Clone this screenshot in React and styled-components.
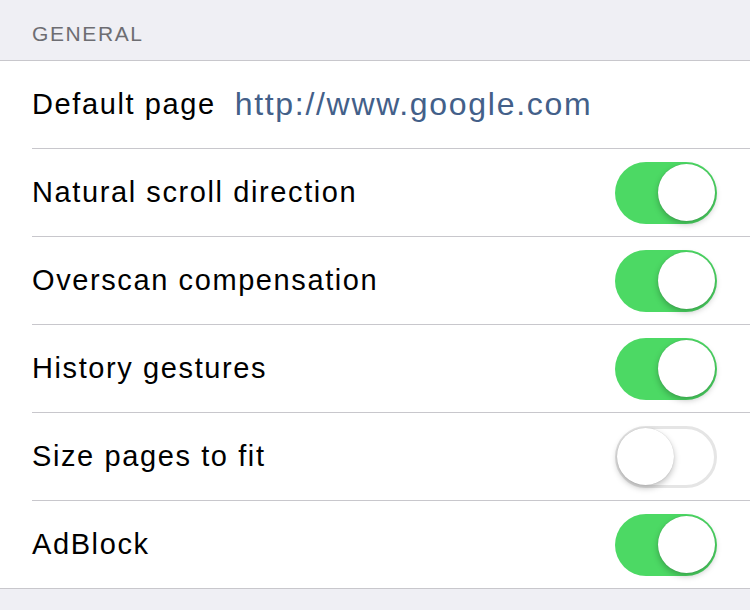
import React, { useState } from 'react';
import styled, { createGlobalStyle } from 'styled-components';

const GlobalStyle = createGlobalStyle`
    html, body {
        margin: 0;
        padding: 0;
        background: #efeff4;
        font-family: "Liberation Sans", Arial, sans-serif;
    }
`;

const Page = styled.div`
    width: 750px;
    height: 610px;
    background: #efeff4;
    overflow: hidden;
`;

const SectionHeader = styled.div`
    height: 60px;
    box-sizing: border-box;
    padding: 22px 32px 0;
    font-size: 21px;
    color: #6d6d72;
    letter-spacing: 1.6px;
`;

const Group = styled.div`
    background: #fff;
    border-top: 1px solid #c8c7cc;
    border-bottom: 1px solid #c8c7cc;
`;

const Row = styled.div`
    height: 87px;
    margin-left: 32px;
    padding-right: 33px;
    display: flex;
    align-items: center;
    border-top: ${(p) => (p.first ? 'none' : '1px solid #c8c7cc')};
`;

const Label = styled.span`
    font-size: 29px;
    letter-spacing: 1.6px;
    color: #000;
    flex: ${(p) => (p.fixed ? 'none' : '1')};
`;

const Value = styled.span`
    font-size: 32px;
    letter-spacing: 1.7px;
    color: #436089;
    margin-left: 19px;
    flex: 1;
`;

const Track = styled.button`
    position: relative;
    width: 102px;
    height: 62px;
    border-radius: 31px;
    padding: 0;
    cursor: pointer;
    box-sizing: border-box;
    background: ${(p) => (p.on ? '#4cd964' : '#fff')};
    border: ${(p) => (p.on ? 'none' : '3px solid #e5e5e5')};
`;

const Knob = styled.span`
    position: absolute;
    top: ${(p) => (p.on ? '2px' : '-1px')};
    left: ${(p) => (p.on ? '43px' : '-1px')};
    width: 57px;
    height: 57px;
    border-radius: 50%;
    background: #fff;
    box-shadow: 0 3px 6px rgba(0, 0, 0, 0.25), 0 0 1px rgba(0, 0, 0, 0.2);
`;

function Toggle({ on, onClick }) {
    return (
        <Track on={on ? 1 : 0} onClick={onClick}>
            <Knob on={on ? 1 : 0} />
        </Track>
    );
}

export default function App() {
    const [toggles, setToggles] = useState([
        { label: 'Natural scroll direction', on: true },
        { label: 'Overscan compensation', on: true },
        { label: 'History gestures', on: true },
        { label: 'Size pages to fit', on: false },
        { label: 'AdBlock', on: true },
    ]);

    const flip = (i) =>
        setToggles((t) => t.map((item, j) => (j === i ? { ...item, on: !item.on } : item)));

    return (
        <Page>
            <GlobalStyle />
            <SectionHeader>GENERAL</SectionHeader>
            <Group>
                <Row first>
                    <Label fixed>Default page</Label>
                    <Value>http://www.google.com</Value>
                </Row>
                {toggles.map((t, i) => (
                    <Row key={t.label}>
                        <Label>{t.label}</Label>
                        <Toggle on={t.on} onClick={() => flip(i)} />
                    </Row>
                ))}
            </Group>
        </Page>
    );
}
